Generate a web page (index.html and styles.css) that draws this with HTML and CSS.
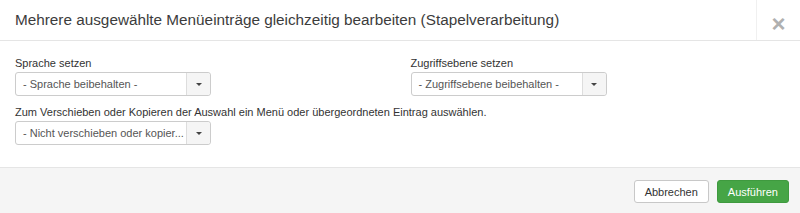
FILE: index.html
```html
<!DOCTYPE html>
<html lang="de">
<head>
    <meta charset="UTF-8">
    <title>Stapelverarbeitung</title>
    <link rel="stylesheet" href="styles.css">
</head>
<body>
    <div class="modal">
        <div class="modal-header">
            <h3>Mehrere ausgewählte Menüeinträge gleichzeitig bearbeiten (Stapelverarbeitung)</h3>
            <button class="close">&times;</button>
        </div>

        <div class="modal-body">
            <div class="row">
                <div class="col">
                    <label>Sprache setzen</label>
                    <div class="select">
                        <span class="select-text">- Sprache beibehalten -</span>
                        <span class="select-arrow"><i class="caret"></i></span>
                    </div>
                </div>
                <div class="col">
                    <label>Zugriffsebene setzen</label>
                    <div class="select">
                        <span class="select-text">- Zugriffsebene beibehalten -</span>
                        <span class="select-arrow"><i class="caret"></i></span>
                    </div>
                </div>
            </div>
            <label>Zum Verschieben oder Kopieren der Auswahl ein Menü oder übergeordneten Eintrag auswählen.</label>
            <div class="select">
                <span class="select-text">- Nicht verschieben oder kopier...</span>
                <span class="select-arrow"><i class="caret"></i></span>
            </div>
        </div>

        <div class="modal-footer">
            <button class="btn">Abbrechen</button>
            <button class="btn btn-success">Ausführen</button>
        </div>
    </div>
</body>
</html>
```

FILE: styles.css
```css
* {
    margin: 0;
    padding: 0;
    box-sizing: border-box;
}

body {
    font-family: 'Liberation Sans', Arial, sans-serif;
    font-size: 11px;
    color: #333;
    background: #fff;
}

.modal {
    width: 800px;
    height: 213px;
    display: flex;
    flex-direction: column;
}

.modal-header {
    height: 41px;
    border-bottom: 1px solid #e5e5e5;
    display: flex;
    align-items: stretch;
}

.modal-header h3 {
    flex: 1;
    font-size: 15.3px;
    font-weight: normal;
    color: #3c3c3c;
    line-height: 40px;
    padding-left: 15px;
}

.close {
    width: 44px;
    border: none;
    border-left: 1px solid #f0f0f0;
    background: none;
    color: #b0b0b0;
    font-family: 'Liberation Sans', Arial, sans-serif;
    font-size: 24px;
    font-weight: bold;
    line-height: 40px;
    padding-top: 4px;
    cursor: pointer;
}

.modal-body {
    flex: 1;
    padding: 14px 15px 0 15px;
}

.row {
    display: flex;
    gap: 21px;
    margin-bottom: 8px;
}

.col {
    width: 375px;
}

label {
    display: block;
    line-height: 17px;
    margin-bottom: 0;
}

.select {
    width: 196px;
    height: 24px;
    border: 1px solid #ccc;
    border-radius: 3px;
    display: flex;
    align-items: stretch;
    background: #fff;
    color: #555;
}

.select-text {
    flex: 1;
    padding-left: 7px;
    line-height: 22px;
    white-space: nowrap;
    overflow: hidden;
}

.select-arrow {
    width: 24px;
    border-left: 1px solid #ddd;
    background: #f5f5f5;
    border-radius: 0 3px 3px 0;
    display: flex;
    align-items: center;
    justify-content: center;
}

.caret {
    width: 0;
    height: 0;
    border-left: 3px solid transparent;
    border-right: 3px solid transparent;
    border-top: 3px solid #444;
}

.modal-footer {
    height: 46px;
    border-top: 1px solid #e5e5e5;
    background: #f5f5f5;
    display: flex;
    justify-content: flex-end;
    align-items: flex-start;
    gap: 8px;
    padding: 12px 11px 0 0;
}

.btn {
    height: 23px;
    padding: 0 10px;
    font-family: 'Liberation Sans', Arial, sans-serif;
    font-size: 11px;
    color: #333;
    background: #fff;
    border: 1px solid #c8c8c8;
    border-radius: 3px;
    cursor: pointer;
}

.btn-success {
    background: #46a546;
    border-color: #3f9a3f;
    color: #fff;
}
```
